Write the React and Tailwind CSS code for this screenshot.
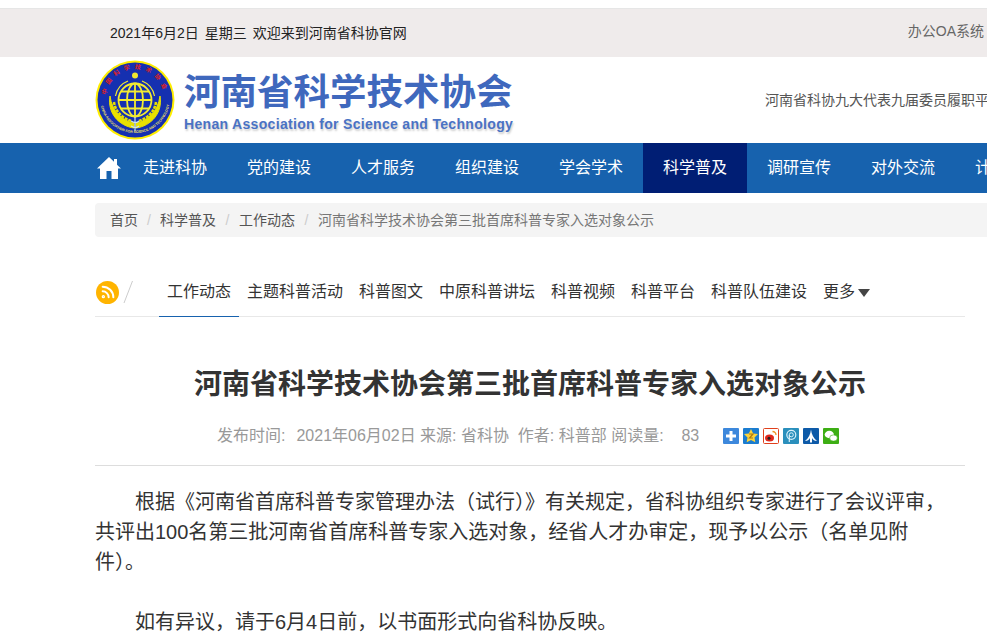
import React from 'react';
import { Rss } from 'lucide-react';

const navItems = ['走进科协', '党的建设', '人才服务', '组织建设', '学会学术', '科学普及', '调研宣传', '对外交流', '计划财务'];
const tabs = ['工作动态', '主题科普活动', '科普图文', '中原科普讲坛', '科普视频', '科普平台', '科普队伍建设'];

const Emblem = () => (
    <svg width="80" height="80" viewBox="0 0 80 80" className="shrink-0">
        <circle cx="40" cy="40" r="39.5" fill="#ffee00" />
        <circle cx="40" cy="40" r="37.5" fill="#1530b0" />
        {/* wreath */}
        <path d="M15 36 C12 53 24 66 39 68 L39 63 C27 61 17 51 15 36Z" fill="#e8e000" stroke="#e8e000" />
        <path d="M65 36 C68 53 56 66 41 68 L41 63 C53 61 63 51 65 36Z" fill="#e8e000" stroke="#e8e000" />
        <path d="M19 42 C20 51 27 58 36 61 M61 42 C60 51 53 58 44 61" fill="none" stroke="#e8e000" strokeWidth="2.500" strokeDasharray="3 1" />
        <path d="M20.500 36A20 20 0 0 1 33 21M59.500 36A20 20 0 0 0 47 21" fill="none" stroke="#f4ec30" strokeWidth="1.200" />
        <circle cx="40" cy="15.500" r="3" fill="#f0e830" />
        <g fill="none" stroke="#f4ec30" strokeWidth="1.800">
            <circle cx="40" cy="40" r="16.500" />
            <ellipse cx="40" cy="40" rx="8" ry="16.500" />
            <path d="M40 23.500V56.500M23.500 40H56.500M26 31.500H54M26 48.500H54" />
        </g>
        <path d="M40 57V71M36 61C39 63 42 63 44 61M36 66C39 68 42 68 44 66" fill="none" stroke="#cfe4ee" strokeWidth="1.200" />
        {/* ring lettering */}
        <path id="emblemTop" d="M11 38A29 29 0 0 1 69 38" fill="none" />
        <path id="emblemBottom" d="M5.500 44A35 35 0 0 0 74.500 44" fill="none" />
        <text fontSize="6" fontWeight="700" fill="#e0201c" fontFamily="'Noto Sans CJK SC', sans-serif" letterSpacing="4.500">
            <textPath href="#emblemTop" startOffset="3">中国科学技术协会</textPath>
        </text>
        <text fontSize="3.500" fontWeight="700" fill="#f0e060" fontFamily="'Liberation Sans', sans-serif">
            <textPath href="#emblemBottom" startOffset="2">CHINA ASSOCIATION FOR SCIENCE AND TECHNOLOGY</textPath>
        </text>
    </svg>
);

const ShareIcons = () => (
    <div className="ml-[24px] flex gap-[4px]">
        <svg width="16" height="16" viewBox="0 0 16 16"><rect width="16" height="16" rx="1" fill="#3d88dc" /><path d="M6.500 3h3v3.500H13v3H9.500V13h-3V9.500H3v-3h3.500Z" fill="#fff" /></svg>
        <svg width="16" height="16" viewBox="0 0 16 16"><rect width="16" height="16" rx="1" fill="#1a7cd0" /><path d="M8 1l2.200 4.400 4.800.7-3.500 3.400.8 4.800L8 11.900l-4.300 2.400.8-4.800L1 6.100l4.800-.7Z" fill="#fbd23a" /><path d="M6 6h4L6.500 10H10" fill="none" stroke="#b07a10" strokeWidth="1.200" /></svg>
        <svg width="16" height="16" viewBox="0 0 16 16"><rect x=".5" y=".5" width="15" height="15" rx="1" fill="#fff" stroke="#e0401c" /><ellipse cx="6.500" cy="10" rx="4.500" ry="3.500" fill="#e0281c" /><circle cx="6" cy="10.200" r="1.500" fill="#222" /><path d="M9.500 3.500a3.500 3.500 0 0 1 3.500 3.500" fill="none" stroke="#f09020" strokeWidth="1.300" /></svg>
        <svg width="16" height="16" viewBox="0 0 16 16"><rect width="16" height="16" rx="1" fill="#2a8fbc" /><circle cx="8.300" cy="6.800" r="4.500" fill="none" stroke="#d8f0fa" strokeWidth="1.200" /><circle cx="8.300" cy="6.800" r="2" fill="none" stroke="#d8f0fa" /><path d="M6.300 7V14" stroke="#d8f0fa" strokeWidth="1.200" /></svg>
        <svg width="16" height="16" viewBox="0 0 16 16"><rect width="16" height="16" rx="1" fill="#0d5aa8" /><path d="M8 1.500c.5 5 2.500 8.500 6 11.500-2.500 0-4-1-5-3v4.500H7V10c-1 2-2.500 3-5 3 3.500-3 5.500-6.500 6-11.500Z" fill="#fff" /></svg>
        <svg width="16" height="16" viewBox="0 0 16 16"><rect width="16" height="16" rx="1" fill="#3dae14" /><ellipse cx="6.300" cy="6.500" rx="4.600" ry="3.700" fill="#fff" /><ellipse cx="10.500" cy="10" rx="3.900" ry="3.100" fill="#fff" stroke="#3dae14" strokeWidth=".6" /></svg>
    </div>
);

const App = () => {
    return (
        <div className="w-[987px] h-[639px] overflow-hidden bg-white font-['Liberation_Sans','Noto_Sans_CJK_SC',sans-serif] text-[#333]">
            <div className="mt-[8px] h-[49px] border-t border-[#e6e6e6] bg-[#efebeb] flex items-center justify-between pl-[110px] pt-[1px] text-[14px]">
                <span className="text-[#222] flex gap-[6px]">
                    <span>2021年6月2日</span>
                    <span>星期三</span>
                    <span>欢迎来到河南省科协官网</span>
                </span>
                <span className="text-[#666] -mt-[4px] pr-[3px]">办公OA系统</span>
            </div>

            <div className="h-[86px] flex items-center pl-[95px]">
                <Emblem />
                <div className="ml-[9px] pt-[3px] flex flex-col">
                    <div className="text-[36.500px] leading-[44px] font-bold text-[#3f68bd] whitespace-nowrap">河南省科学技术协会</div>
                    <div className="text-[14px] leading-[18px] font-bold text-[#4a72c4] tracking-[0.32px] whitespace-nowrap [text-shadow:1px_2px_2px_#ccc]">Henan Association for Science and Technology</div>
                </div>
                <div className="ml-auto w-[222px] overflow-hidden whitespace-nowrap text-[14px] text-[#555]">河南省科协九大代表九届委员履职平台</div>
            </div>

            <div className="h-[50px] bg-[#1762ae] flex items-stretch pl-[95px] text-white text-[16px]">
                <div className="w-[28px] shrink-0 flex items-center justify-start">
                    <svg width="24" height="22" viewBox="0 0 24 22" className="ml-[2px]"><path d="M12 0L17 4.800V2H20V7.700L24 11.500H21V22H14.500V14H9.500V22H3V11.500H0Z" fill="#fff" /></svg>
                </div>
                {navItems.map((item) => (
                    <div key={item} className={`w-[104px] justify-center flex items-center shrink-0 ${item === '科学普及' ? 'bg-[#001e74]' : ''}`}>{item}</div>
                ))}
            </div>

            <div className="mt-[10px] ml-[95px] h-[34px] bg-[#f4f4f4] rounded-l-[4px] flex items-center pl-[15px] text-[14px] text-[#555]">
                <span>首页</span>
                <span className="text-[#ccc] w-[22px] text-center">/</span>
                <span>科学普及</span>
                <span className="text-[#ccc] w-[23px] text-center">/</span>
                <span>工作动态</span>
                <span className="text-[#ccc] w-[23px] text-center">/</span>
                <span className="text-[#777]">河南省科学技术协会第三批首席科普专家入选对象公示</span>
            </div>

            <div className="ml-[95px] w-[870px]">
                <div className="mt-[28px] h-[52px] border-b border-[#e8e8e8] flex items-stretch text-[16px]">
                    <div className="w-[64px] flex items-center shrink-0 pt-[3px]">
                        <div className="ml-[1px] w-[23px] h-[23px] rounded-full bg-[#ffb400] flex items-center justify-center">
                            <Rss size={16} color="#fff" strokeWidth={3} />
                        </div>
                        <svg width="10" height="24" viewBox="0 0 10 24" className="ml-[4px]"><path d="M9.500 1L1 23" stroke="#ccc" strokeWidth="1" /></svg>
                    </div>
                    {tabs.map((tab, i) => (
                        <div key={tab} className={`px-2 flex items-center shrink-0 pt-[3px] ${i === 0 ? 'border-b border-[#1762ae] -mb-px' : ''}`}>{tab}</div>
                    ))}
                    <div className="px-2 flex items-center shrink-0 pt-[3px]">
                        更多
                        <span className="ml-[3px] mt-[2px] w-0 h-0 border-x-[6px] border-x-transparent border-t-[8px] border-t-[#444]" />
                    </div>
                </div>

                <h1 className="mt-[48px] text-center text-[28px] leading-[40px] font-bold text-[#333]">河南省科学技术协会第三批首席科普专家入选对象公示</h1>

                <div className="mt-[16px] h-[30px] flex items-center pl-[122px] text-[16px] text-[#999] whitespace-nowrap">
                    <span>发布时间:</span>
                    <span className="ml-[11px]">2021年06月02日 来源: 省科协&nbsp; 作者: 科普部 阅读量:&nbsp; &nbsp; 83</span>
                    <ShareIcons />
                </div>

                <div className="mt-[14px] border-t border-[#ddd]" />

                <div className="mt-[21px] w-[850px] text-[20px] leading-[30px] text-[#333]">
                    <p className="indent-[40px]">根据《河南省首席科普专家管理办法（试行）》有关规定，省科协组织专家进行了会议评审，共评出100名第三批河南省首席科普专家入选对象，经省人才办审定，现予以公示（名单见附件）。</p>
                    <p className="mt-[30px] indent-[40px]">如有异议，请于6月4日前，以书面形式向省科协反映。</p>
                </div>
            </div>
        </div>
    );
};

export default App;
